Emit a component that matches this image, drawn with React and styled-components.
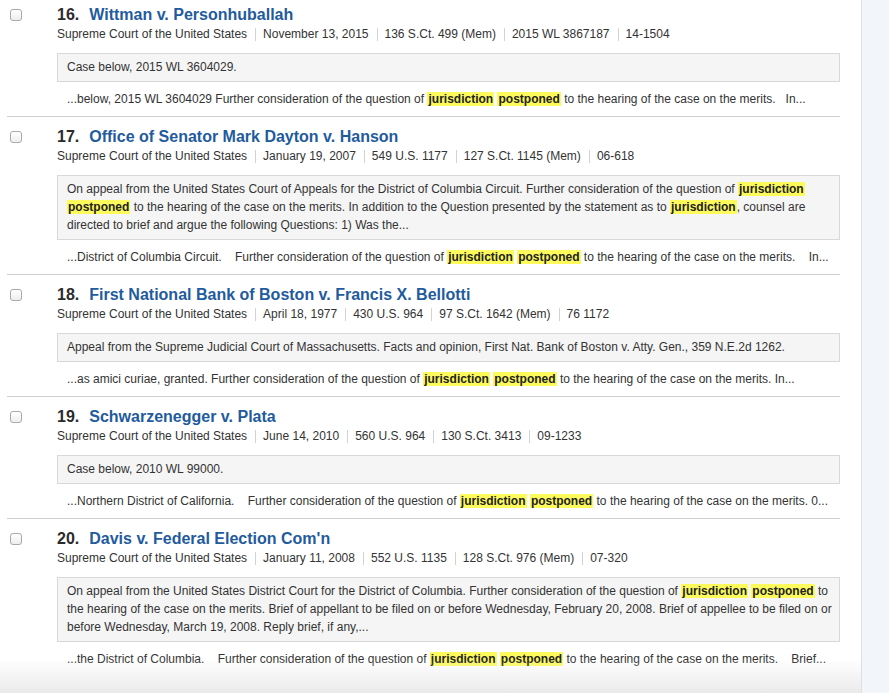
import React from "react";
import styled, { createGlobalStyle } from "styled-components";

const Global = createGlobalStyle`
  html, body { margin: 0; padding: 0; background: #fff; }
  body { font-family: "Liberation Sans", Arial, Helvetica, sans-serif; color: #333; }
`;

const Page = styled.div`
  display: flex;
  width: 889px;
  height: 693px;
  overflow: hidden;
`;

const Main = styled.main`
  position: relative;
  flex: 1;
  background: #fff;
  padding-left: 7px;
  overflow: hidden;
`;

const Rail = styled.aside`
  width: 27px;
  flex: none;
  background: #f2f6fb;
  border-left: 1px solid #dcdee2;
`;

const Fade = styled.div`
  position: absolute;
  left: 0;
  right: 0;
  bottom: 0;
  height: 34px;
  background: linear-gradient(rgba(255, 255, 255, 0), rgba(233, 233, 233, 0.95));
  pointer-events: none;
`;

const List = styled.ol`
  list-style: none;
  margin: -5px 0 0;
  padding: 0;
  width: 833px;
`;

const Row = styled.li`
  display: grid;
  grid-template-columns: 50px 1fr;
  padding: 9px 0 9px;
  border-bottom: 1px solid #cfcfcf;
  &:last-child { border-bottom: none; }
`;

const Check = styled.input.attrs({ type: "checkbox" })`
  appearance: none;
  margin: 5px 0 0 3px;
  width: 12px;
  height: 12px;
  box-sizing: border-box;
  border: 1px solid #a9a9a9;
  border-radius: 3px;
  background: linear-gradient(#ffffff, #eeeeee);
`;

const Body = styled.div`
  min-width: 0;
`;

const Title = styled.h3`
  margin: 0;
  font-size: 16px;
  line-height: 21px;
  font-weight: 700;
  white-space: nowrap;
`;

const Num = styled.span`
  color: #2b2b2b;
  margin-right: 10px;
`;

const Link = styled.a`
  color: #1f5b9d;
  text-decoration: none;
`;

const Meta = styled.div`
  display: flex;
  align-items: center;
  height: 16px;
  margin-top: 1px;
  font-size: 12px;
  color: #333;
  white-space: nowrap;
`;

const MetaItem = styled.span`
  line-height: 13px;
  padding: 0 8px 0 7px;
  border-left: 1px solid #d2d2d2;
  &:first-child { padding-left: 0; border-left: none; }
`;

const Summary = styled.div`
  margin-top: 11px;
  background: #f5f5f5;
  border: 1px solid #d8d8d8;
  padding: 4px 3px 5px 9px;
  font-size: 12px;
  line-height: 18px;
  color: #333;
`;

const Snippet = styled.div`
  margin-top: 9px;
  padding-left: 10px;
  font-size: 12px;
  line-height: 16px;
  color: #333;
  white-space: pre;
`;

const Hit = styled.mark`
  background: #fdfb5c;
  color: #222;
  font-weight: 700;
  padding: 0 1px;
`;

function Highlighted({ text }) {
  const parts = text.split(/(jurisdiction|postponed)/g);
  return parts.map((p, i) =>
    p === "jurisdiction" || p === "postponed" ? <Hit key={i}>{p}</Hit> : <React.Fragment key={i}>{p}</React.Fragment>
  );
}

const results = [
  {
    n: 16,
    title: "Wittman v. Personhuballah",
    meta: ["Supreme Court of the United States", "November 13, 2015", "136 S.Ct. 499 (Mem)", "2015 WL 3867187", "14-1504"],
    summary: "Case below, 2015 WL 3604029.",
    snippet: "...below, 2015 WL 3604029 Further consideration of the question of jurisdiction postponed to the hearing of the case on the merits.   In...",
  },
  {
    n: 17,
    title: "Office of Senator Mark Dayton v. Hanson",
    meta: ["Supreme Court of the United States", "January 19, 2007", "549 U.S. 1177", "127 S.Ct. 1145 (Mem)", "06-618"],
    summary:
      "On appeal from the United States Court of Appeals for the District of Columbia Circuit. Further consideration of the question of jurisdiction postponed to the hearing of the case on the merits. In addition to the Question presented by the statement as to jurisdiction, counsel are directed to brief and argue the following Questions: 1) Was the...",
    snippet: "...District of Columbia Circuit.    Further consideration of the question of jurisdiction postponed to the hearing of the case on the merits.    In...",
  },
  {
    n: 18,
    title: "First National Bank of Boston v. Francis X. Bellotti",
    meta: ["Supreme Court of the United States", "April 18, 1977", "430 U.S. 964", "97 S.Ct. 1642 (Mem)", "76 1172"],
    summary:
      "Appeal from the Supreme Judicial Court of Massachusetts. Facts and opinion, First Nat. Bank of Boston v. Atty. Gen., 359 N.E.2d 1262.",
    snippet: "...as amici curiae, granted. Further consideration of the question of jurisdiction postponed to the hearing of the case on the merits. In...",
  },
  {
    n: 19,
    title: "Schwarzenegger v. Plata",
    meta: ["Supreme Court of the United States", "June 14, 2010", "560 U.S. 964", "130 S.Ct. 3413", "09-1233"],
    summary: "Case below, 2010 WL 99000.",
    snippet: "...Northern District of California.    Further consideration of the question of jurisdiction postponed to the hearing of the case on the merits. 0...",
  },
  {
    n: 20,
    title: "Davis v. Federal Election Com'n",
    meta: ["Supreme Court of the United States", "January 11, 2008", "552 U.S. 1135", "128 S.Ct. 976 (Mem)", "07-320"],
    summary:
      "On appeal from the United States District Court for the District of Columbia. Further consideration of the question of jurisdiction postponed to the hearing of the case on the merits. Brief of appellant to be filed on or before Wednesday, February 20, 2008. Brief of appellee to be filed on or before Wednesday, March 19, 2008. Reply brief, if any,...",
    snippet: "...the District of Columbia.    Further consideration of the question of jurisdiction postponed to the hearing of the case on the merits.    Brief...",
  },
];

export default function App() {
  return (
    <>
      <Global />
      <Page>
        <Main>
          <List>
            {results.map((r) => (
              <Row key={r.n}>
                <div>
                  <Check aria-label={`Select result ${r.n}`} />
                </div>
                <Body>
                  <Title>
                    <Num>{r.n}.</Num>
                    <Link href="#">{r.title}</Link>
                  </Title>
                  <Meta>
                    {r.meta.map((m) => (
                      <MetaItem key={m}>{m}</MetaItem>
                    ))}
                  </Meta>
                  <Summary>
                    <Highlighted text={r.summary} />
                  </Summary>
                  <Snippet>
                    <Highlighted text={r.snippet} />
                  </Snippet>
                </Body>
              </Row>
            ))}
          </List>
          <Fade />
        </Main>
        <Rail />
      </Page>
    </>
  );
}
